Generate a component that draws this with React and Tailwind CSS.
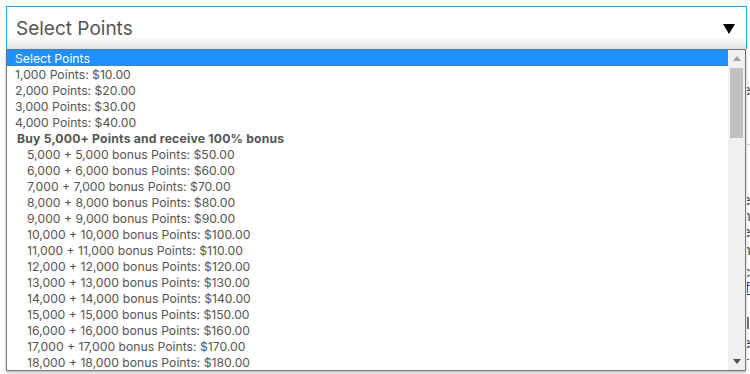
import React from "react";

const plain = [
  "1,000 Points: $10.00",
  "2,000 Points: $20.00",
  "3,000 Points: $30.00",
  "4,000 Points: $40.00",
];

const bonus = [];
for (let i = 5; i <= 18; i++) {
  bonus.push(`${i},000 + ${i},000 bonus Points: $${i * 10}.00`);
}

export default function App() {
  return (
    <div className="relative w-[750px] h-[374px] bg-white overflow-hidden font-['Inter','Open_Sans',sans-serif] flex flex-col">
      <div className="pt-[6px] pl-[6px] pr-[3px]">
        <div className="h-[43px] border border-[#1aabdc] border-b-0 bg-gradient-to-b from-white from-[70%] to-[#e4e4e4] flex items-center justify-between pl-[9px] pr-[11px]">
          <span className="text-[19px] text-[#555] pt-[2px]">Select Points</span>
          <svg width="12" height="10" viewBox="0 0 12 10" className="mt-[1px]">
            <polygon points="0,0 12,0 6,10" fill="#000" />
          </svg>
        </div>
      </div>

      {/* page content peeking out to the right of the open list */}
      <div className="flex-1 flex">
        <div className="flex-1"></div>
        <div className="w-[3px] flex flex-col overflow-hidden text-[13px] leading-[16px] text-[#444]">
          <div className="mt-[33px] -ml-[4px]">e</div>
          <div className="mt-[46px] h-px bg-[#cfcfcf]"></div>
          <div className="mt-[47px] -ml-[4px]">e</div>
          <div className="-ml-[4px]">n</div>
          <div className="-ml-[4px]">e</div>
          <div className="mt-[2px] -ml-[4px]">n</div>
          <div className="mt-[6px] -ml-[4px]">c</div>
          <div className="-ml-[2px] text-[#1a0dab] underline">f</div>
          <div className="mt-[21px] w-[2px] h-[12px] bg-[#777]"></div>
          <div className="mt-[6px] -ml-[4px]">e</div>
          <div className="mt-[3px] -ml-[3px]">r</div>
        </div>
      </div>

      {/* open dropdown list */}
      <div className="absolute left-[6px] top-[49px] w-[740px] h-[322px] border border-[#767676] bg-white flex shadow-[0_2px_3px_rgba(0,0,0,0.25)]">
        <div className="flex-1 overflow-hidden text-[12.2px] text-[#555]">
          <div className="h-[16px] leading-[18px] bg-[#1e90ff] text-white pl-[8px]">Select Points</div>
          {plain.map((t) => (
            <div key={t} className="h-[16px] leading-[18px] pl-[8px]">{t}</div>
          ))}
          <div className="h-[16px] leading-[18px] pl-[10px] font-bold tracking-[0.2px]">Buy 5,000+ Points and receive 100% bonus</div>
          {bonus.map((t) => (
            <div key={t} className="h-[16px] leading-[18px] pl-[20px]">{t}</div>
          ))}
        </div>
        <div className="w-[17px] bg-[#f0f0f0] flex flex-col items-center">
          <div className="h-[17px] w-full flex items-center justify-center">
            <svg width="8" height="5" viewBox="0 0 8 5">
              <polygon points="0,5 8,5 4,0" fill="#a3a3a3" />
            </svg>
          </div>
          <div className="mt-px w-[13px] h-[70px] bg-[#c1c1c1]"></div>
          <div className="flex-1"></div>
          <div className="h-[17px] w-full flex items-center justify-center">
            <svg width="8" height="5" viewBox="0 0 8 5">
              <polygon points="0,0 8,0 4,5" fill="#505050" />
            </svg>
          </div>
        </div>
      </div>
    </div>
  );
}
